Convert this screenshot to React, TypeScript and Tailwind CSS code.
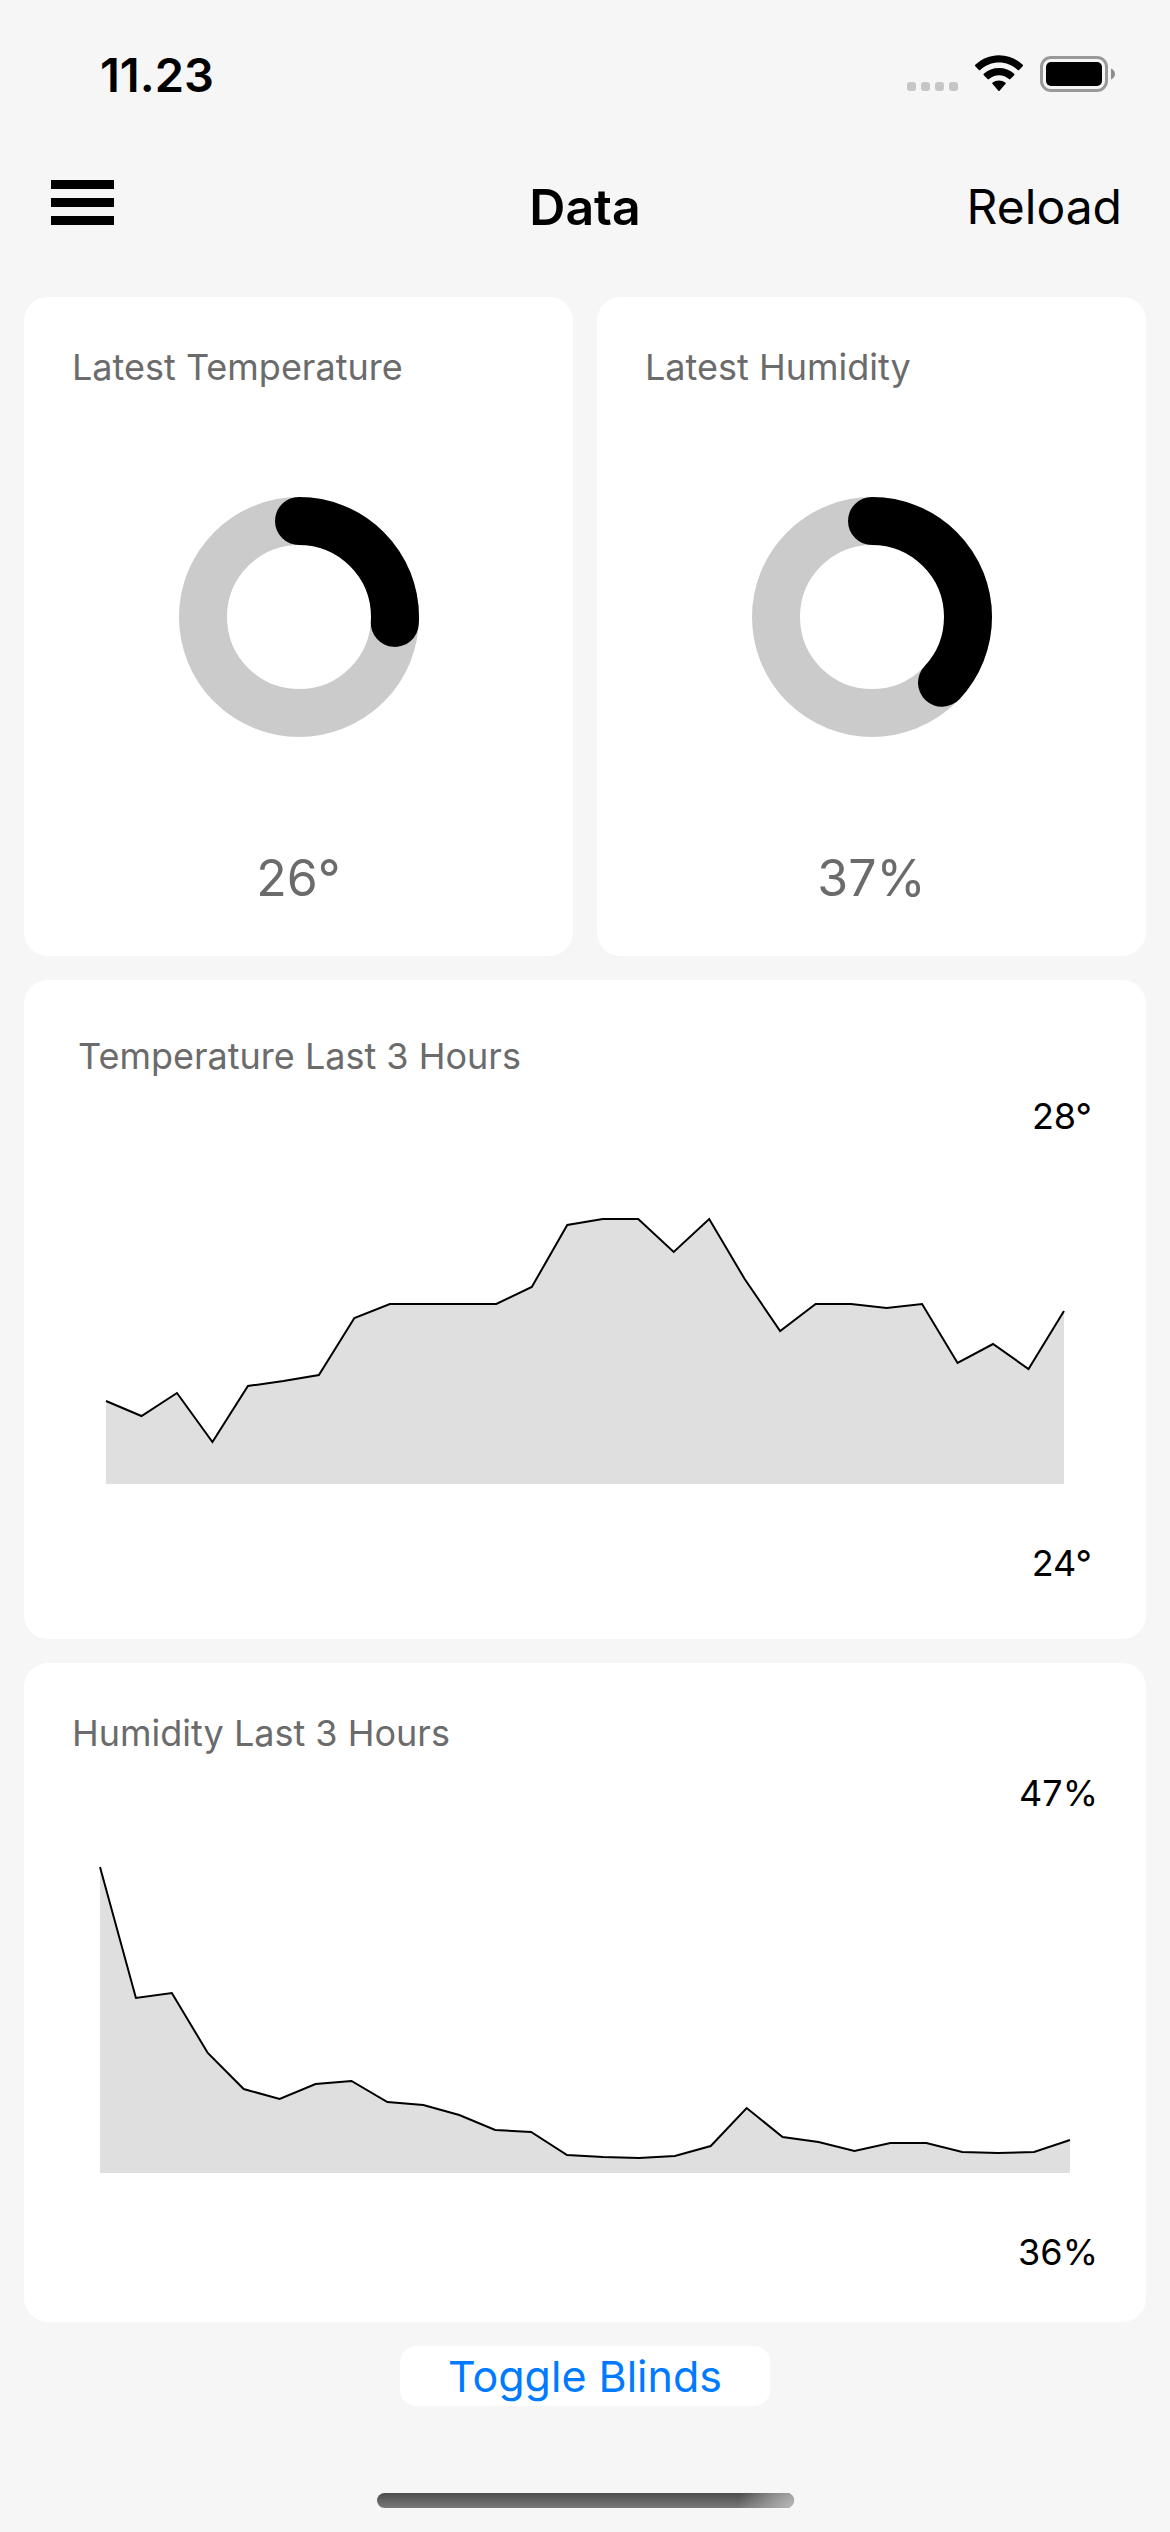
import React from "react";

// Samples are heights above the chart's base line, one every few minutes.
const temperature = [
  83, 68, 91, 42, 98, 103, 109, 166, 180, 180, 180, 180, 197, 259, 265, 265,
  232, 265, 205, 153, 180, 180, 176, 180, 121, 140, 115, 173,
];
const humidity = [
  306, 175, 180, 120, 84, 74, 89, 92, 71, 68, 58, 43, 41, 18, 16, 15, 17, 27,
  65, 36, 31, 22, 30, 30, 21, 20, 21, 33,
];

function StatusBar() {
  return (
    <div className="flex h-[149px] items-center justify-between pr-[54px] pl-[100px]">
      <span className="text-[47px] leading-[60px] font-semibold">11.23</span>
      <svg width="210" height="39" viewBox="0 0 210 39" aria-hidden="true">
        <g fill="#c6c6c6">
          <rect x="1" y="27" width="9" height="9" rx="3" />
          <rect x="15" y="27" width="9" height="9" rx="3" />
          <rect x="29" y="27" width="9" height="9" rx="3" />
          <rect x="43" y="27" width="9" height="9" rx="3" />
        </g>
        <path d="M69.3 11.2a1 1 0 0 1 0-1.4C75.8 3.6 84 0.2 93 0.2s17.2 3.4 23.700 9.600a1 1 0 0 1 0 1.400l-3.600 3.800a1 1 0 0 1-1.400 0C106.600 10.100 100 7.500 93 7.500s-13.600 2.600-18.700 7.500a1 1 0 0 1-1.400 0z" />
        <path d="M77.8 20.2a1 1 0 0 1 0-1.4C82 15 87.300 13 93 13s11 2 15.200 5.800a1 1 0 0 1 0 1.400l-3.800 3.900a1 1 0 0 1-1.400 0C100.200 21.500 96.700 20.200 93 20.200s-7.200 1.300-10 3.900a1 1 0 0 1-1.400 0z" />
        <path d="M86.6 29.1a1 1 0 0 1 0-1.5C88.400 26.200 90.600 25.500 93 25.500s4.600.7 6.400 2.100a1 1 0 0 1 0 1.500l-5.600 6.400a1 1 0 0 1-1.600 0z" />
        <rect x="135.5" y="2.500" width="65" height="33" rx="9.500" fill="none" stroke="#999999" strokeWidth="3" />
        <rect x="140" y="7" width="56" height="24" rx="5" />
        <path d="M205 13.500c2.500 1 4 3 4 5.500s-1.500 4.500-4 5.500z" fill="#8c8c8c" />
      </svg>
    </div>
  );
}

function Header() {
  return (
    <header className="mb-8 grid h-[116px] grid-cols-[1fr_auto_1fr] items-center px-12 leading-[60px]">
      <button type="button" aria-label="Menu" className="justify-self-start pb-[10px] pl-[3px]">
        <svg width="63" height="45" viewBox="0 0 63 45" className="block" aria-hidden="true">
          <path d="M0 0h63v9H0zM0 18h63v9H0zM0 36h63v9H0z" />
        </svg>
      </button>
      <h1 className="text-[50px] font-semibold">Data</h1>
      <button type="button" className="justify-self-end text-[48px]">
        Reload
      </button>
    </header>
  );
}

function GaugeCard({ title, percent, unit }: { title: string; percent: number; unit: string }) {
  return (
    <section className="flex flex-col rounded-3xl bg-white p-12">
      <h2 className="text-[36px] leading-[44px] text-[#6b6b6b]">{title}</h2>
      <svg
        width="240"
        height="240"
        viewBox="0 0 240 240"
        className="mt-[108px] self-center"
        role="img"
        aria-label={title}
      >
        <circle cx="120" cy="120" r="96" fill="none" stroke="#cbcbcb" strokeWidth="48" />
        <circle
          cx="120"
          cy="120"
          r="96"
          fill="none"
          stroke="#000000"
          strokeWidth="48"
          strokeLinecap="round"
          pathLength="100"
          strokeDasharray={`${percent} 100`}
          transform="rotate(-90 120 120)"
        />
      </svg>
      <p className="mt-[111px] text-center text-[50px] leading-[60px] text-[#6b6b6b]">
        {percent}
        {unit}
      </p>
    </section>
  );
}

function AreaChart({ data, height, label }: { data: number[]; height: number; label: string }) {
  const last = data.length - 1;
  const line = data.map((v, i) => `${(i * 1000) / last},${height - v}`).join(" ");
  return (
    <svg
      viewBox={`0 0 1000 ${height}`}
      preserveAspectRatio="none"
      className="block w-full overflow-visible"
      style={{ height }}
      role="img"
      aria-label={label}
    >
      <polygon points={`0,${height} ${line} 1000,${height}`} fill="#dfdfdf" />
      <polyline points={line} fill="none" stroke="#000000" strokeWidth="2" vectorEffect="non-scaling-stroke" />
    </svg>
  );
}

type ChartCardProps = {
  title: string;
  data: number[];
  height: number;
  max: string;
  min: string;
  padding: string;
};

function ChartCard({ title, data, height, max, min, padding }: ChartCardProps) {
  return (
    <section className={`rounded-3xl bg-white text-[36px] leading-[44px] ${padding}`}>
      <h2 className="text-[#6b6b6b]">{title}</h2>
      <p className="mt-4 text-right">{max}</p>
      <div className="px-7">
        <AreaChart data={data} height={height} label={title} />
      </div>
      <p className="mt-[57px] text-right">{min}</p>
    </section>
  );
}

export default function App() {
  return (
    <div className="flex min-h-screen flex-col bg-[#f6f6f6] font-['Inter','Liberation_Sans',sans-serif] text-black">
      <StatusBar />
      <Header />
      <main className="flex flex-col gap-6 px-6">
        <div className="grid grid-cols-2 gap-6">
          <GaugeCard title="Latest Temperature" percent={26} unit="°" />
          <GaugeCard title="Latest Humidity" percent={37} unit="%" />
        </div>
        <ChartCard title="Temperature Last 3 Hours" data={temperature} height={346} max="28°" min="24°" padding="p-[54px]" />
        <ChartCard title="Humidity Last 3 Hours" data={humidity} height={358} max="47%" min="36%" padding="p-12" />
        <button
          type="button"
          className="self-center rounded-2xl bg-white px-12 text-[43px] leading-[60px] text-[#007aff]"
        >
          Toggle Blinds
        </button>
      </main>
      <div className="mt-auto flex justify-center pb-6">
        <div className="h-[15px] w-[417px] overflow-hidden rounded-full bg-linear-to-b from-[#4c4c4c] to-[#797979]">
          <div className="h-full w-full bg-[radial-gradient(circle_at_bottom_right,#b8b8b8,transparent_56px)]" />
        </div>
      </div>
    </div>
  );
}
